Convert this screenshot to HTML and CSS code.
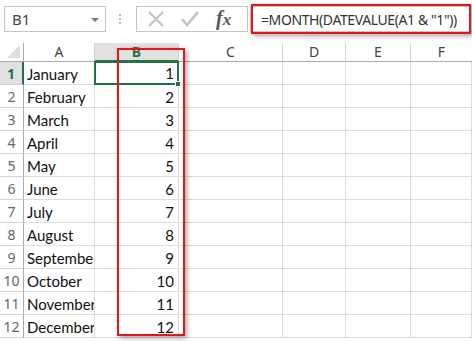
FILE: index.html
```html
<!DOCTYPE html>
<html>
<head>
<meta charset="utf-8">
<link rel="stylesheet" href="styles.css">
</head>
<body>
<div class="app">
  <div class="toolbar">
    <div class="namebox"><span class="nb-text">B1</span><span class="nb-arrow"></span></div>
    <div class="dots"><i></i><i></i><i></i></div>
    <div class="fnbox">
      <svg class="ic-x" width="20" height="18" viewBox="0 0 20 18"><path d="M3 2 L17 16 M17 2 L3 16" stroke="#c4c4c4" stroke-width="2.2" fill="none"/></svg>
      <svg class="ic-check" width="20" height="18" viewBox="0 0 20 18"><path d="M2 9 L7 15 L18 2" stroke="#c4c4c4" stroke-width="2.6" fill="none"/></svg>
      <span class="fx"><span class="f">f</span><span class="x">x</span></span>
    </div>
    <div class="formula">
      <span class="ftext">=MONTH(DATEVALUE(A1 &amp; "1"))</span>
      <div class="hl hl-formula"></div>
    </div>
  </div>
  <div class="sheet">
    <div class="corner"><span class="tri"></span></div>
    <div class="ch">A</div>
    <div class="ch sel">B</div>
    <div class="ch">C</div>
    <div class="ch">D</div>
    <div class="ch">E</div>
    <div class="ch last">F</div>

    <div class="rh sel">1</div><div class="c txt">January</div><div class="c num active">1<span class="handle"></span></div><div class="c"></div><div class="c"></div><div class="c"></div><div class="c"></div>
    <div class="rh">2</div><div class="c txt">February</div><div class="c num">2</div><div class="c"></div><div class="c"></div><div class="c"></div><div class="c"></div>
    <div class="rh">3</div><div class="c txt">March</div><div class="c num">3</div><div class="c"></div><div class="c"></div><div class="c"></div><div class="c"></div>
    <div class="rh">4</div><div class="c txt">April</div><div class="c num">4</div><div class="c"></div><div class="c"></div><div class="c"></div><div class="c"></div>
    <div class="rh">5</div><div class="c txt">May</div><div class="c num">5</div><div class="c"></div><div class="c"></div><div class="c"></div><div class="c"></div>
    <div class="rh">6</div><div class="c txt">June</div><div class="c num">6</div><div class="c"></div><div class="c"></div><div class="c"></div><div class="c"></div>
    <div class="rh">7</div><div class="c txt">July</div><div class="c num">7</div><div class="c"></div><div class="c"></div><div class="c"></div><div class="c"></div>
    <div class="rh">8</div><div class="c txt">August</div><div class="c num">8</div><div class="c"></div><div class="c"></div><div class="c"></div><div class="c"></div>
    <div class="rh">9</div><div class="c txt">September</div><div class="c num">9</div><div class="c"></div><div class="c"></div><div class="c"></div><div class="c"></div>
    <div class="rh">10</div><div class="c txt">October</div><div class="c num">10</div><div class="c"></div><div class="c"></div><div class="c"></div><div class="c"></div>
    <div class="rh">11</div><div class="c txt">November</div><div class="c num">11</div><div class="c"></div><div class="c"></div><div class="c"></div><div class="c"></div>
    <div class="rh">12</div><div class="c txt">December</div><div class="c num">12</div><div class="c"></div><div class="c"></div><div class="c"></div><div class="c"></div>

    <div class="hl hl-col"></div>
  </div>
</div>
</body>
</html>
```
FILE: styles.css
```css
* { box-sizing: border-box; }
html, body { margin: 0; padding: 0; background: #fff; }
body { width: 472px; height: 341px; overflow: hidden; font-family: "Open Sans", "Noto Sans", sans-serif; }
.app { width: 472px; height: 341px; position: relative; }

.toolbar { height: 43px; display: flex; align-items: flex-start; padding-top: 6px; }
.namebox { margin-left: 4px; width: 102px; height: 26px; border: 1px solid #c6c6c6; display: flex; align-items: center; justify-content: space-between; padding: 0 6px 0 7px; }
.nb-text { font-size: 15px; color: #444; font-family: "Noto Sans", sans-serif; }
.nb-arrow { width: 0; height: 0; border-left: 4px solid transparent; border-right: 4px solid transparent; border-top: 4px solid #777; margin-top: 1px; }
.dots { width: 4px; margin-left: 13px; margin-right: 13px; height: 26px; display: flex; flex-direction: column; justify-content: center; gap: 2px; }
.dots i { display: block; width: 2px; height: 2px; background: #bbb; }
.fnbox { width: 112px; height: 26px; border: 1px solid #c6c6c6; display: flex; align-items: center; padding-left: 9px; }
.ic-x { margin-right: 14px; }
.ic-check { margin-right: 16px; }
.fx { font-family: "Liberation Serif", serif; font-style: italic; color: #555; font-size: 20px; line-height: 1; margin-top: -2px; }
.fx .f { font-weight: bold; }
.fx .x { font-size: 17px; font-weight: bold; }
.formula { margin-left: 2px; flex: 1; min-width: 0; height: 26px; border: 1px solid #c6c6c6; border-right: none; position: relative; display: flex; align-items: center; padding-left: 10px; white-space: nowrap; }
.ftext { font-size: 14px; color: #333; font-family: "Noto Sans", sans-serif; letter-spacing: -0.4px; white-space: nowrap; }

.hl { position: absolute; border: 2px solid #e8141b; box-shadow: 2px 2px 5px rgba(0,0,0,0.35); pointer-events: none; }
.hl-formula { left: 0; top: -3px; right: 1px; height: 30px; }

.sheet { position: relative; display: grid; grid-template-columns: 24px 71px 84px 104px 63px 65px 61px; grid-template-rows: 19px repeat(12, 23px); }
.corner { border-right: 1px solid #ababab; border-bottom: 1px solid #ababab; position: relative; }
.tri { position: absolute; right: 3px; bottom: 3px; width: 0; height: 0; border-left: 13px solid transparent; border-bottom: 13px solid #dfdfdf; }
.ch { border-right: 1px solid #d4d4d4; border-bottom: 1px solid #ababab; font-size: 14px; color: #444; display: flex; align-items: center; justify-content: center; font-family: "Noto Sans", sans-serif; line-height: 1; }
.ch.sel { background: #e1e1e1; color: #217346; font-weight: bold; border-bottom: 2px solid #217346; }
.ch.last { border-right: none; }
.rh { border-right: 1px solid #ababab; border-bottom: 1px solid #d4d4d4; font-size: 14px; color: #666; display: flex; align-items: flex-end; justify-content: center; padding-bottom: 1px; font-family: "Noto Sans", sans-serif; }
.rh.sel { background: #e1e1e1; color: #217346; font-weight: bold; border-right: 2px solid #217346; }
.c { border-right: 1px solid #dadcdd; border-bottom: 1px solid #dadcdd; font-size: 15px; color: #111; display: flex; align-items: flex-end; padding: 0 4px 1px 3px; line-height: 1.2; font-family: "Lato", sans-serif; white-space: nowrap; overflow: hidden; }
.c.num { justify-content: flex-end; }
.c.active { border: 2px solid #217346; margin: -1px 0 0 -1px; position: relative; overflow: visible; padding-right: 3px; }
.handle { position: absolute; right: -4px; bottom: -4px; width: 6px; height: 6px; background: #217346; border: 1px solid #fff; }
.hl-col { left: 117px; top: 5px; width: 68px; height: 288px; }
```
